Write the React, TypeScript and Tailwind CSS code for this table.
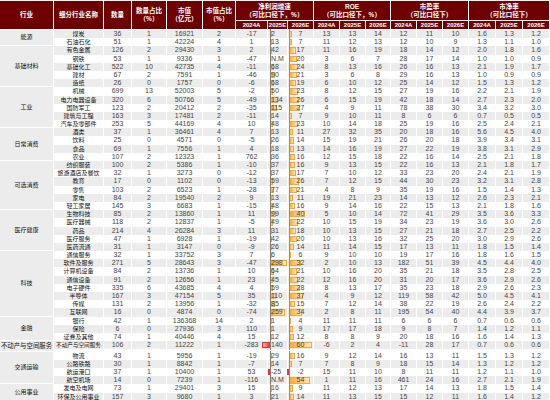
const groups: [string, string[]][] = [
  ["能源", [
    "煤炭 36 1 16921 2 -17 2 7 13 13 14 12 11 10 1.6 1.3 1.2",
    "石油石化 51 1 42224 4 1 13 7 11 12 13 12 10 9 1.3 1.1 1.0",
  ]],
  ["基础材料", [
    "有色金属 126 2 29430 3 2 42 17 11 16 19 18 14 12 2.0 1.8 1.6",
    "钢铁 53 1 9336 1 -47 N.M 20 3 6 7 28 17 14 1.0 1.0 0.9",
    "基础化工 522 10 42735 4 -11 68 24 8 13 16 26 16 13 2.1 1.9 1.7",
    "建材 67 2 7591 1 -46 90 21 3 6 8 29 16 13 1.0 0.9 0.9",
    "造纸 26 0 1757 0 -6 68 19 6 10 12 25 14 12 1.5 1.3 1.2",
  ]],
  ["工业", [
    "机械 699 13 52003 5 -2 50 23 8 12 15 27 19 16 2.2 2.1 1.9",
    "电力电器设备 320 6 50766 5 -49 134 26 6 15 19 42 18 14 2.7 2.3 2.0",
    "国防军工 123 2 20412 2 -35 115 27 4 9 11 78 38 30 3.4 3.2 3.0",
    "建筑与工程 163 3 17481 2 -11 14 7 9 10 11 8 6 6 0.7 0.5 0.5",
    "汽车及零部件 253 5 44169 4 10 48 23 10 14 18 25 19 16 2.5 2.4 2.1",
  ]],
  ["日常消费", [
    "酒类 37 1 36461 4 7 13 11 27 32 35 20 18 16 5.6 4.5 4.0",
    "饮料 25 0 4571 0 -5 26 14 15 19 21 26 20 18 3.9 3.4 3.1",
    "食品 69 1 7556 1 4 18 13 14 16 19 27 22 19 3.8 3.1 2.9",
    "农业 107 2 12323 1 762 36 16 12 15 18 22 16 14 2.5 2.1 1.8",
  ]],
  ["可选消费", [
    "纺织服装 100 2 5386 1 -10 37 16 9 13 15 22 16 13 2.1 1.8 1.7",
    "旅游酒店及餐饮 32 1 3273 0 -12 37 17 7 10 12 33 23 20 2.4 2.1 1.9",
    "教育 17 0 1102 0 -13 59 26 7 12 15 44 30 23 3.2 3.1 2.8",
    "零售 103 2 6523 1 -28 77 21 4 8 9 35 19 16 1.5 1.4 1.3",
    "家电 84 2 19540 2 9 13 11 19 21 23 14 13 12 2.6 2.3 2.1",
    "轻工家居 145 3 6683 1 -15 48 16 9 14 16 22 15 13 2.1 1.8 1.6",
  ]],
  ["医疗健康", [
    "生物科技 85 2 13860 1 11 99 40 5 10 14 72 41 29 3.5 3.6 3.3",
    "医疗器械 118 2 12837 1 -5 49 22 10 15 19 34 23 19 3.6 3.0 2.6",
    "药品 214 4 26284 3 11 31 18 10 13 15 27 21 18 2.7 2.5 2.2",
    "医疗服务 47 1 6928 1 -19 42 20 10 13 16 32 25 20 3.0 2.9 2.6",
    "医药流通 31 1 3147 0 -9 26 14 11 14 15 17 13 11 1.8 1.5 1.4",
  ]],
  ["科技", [
    "通信服务 32 1 33752 3 7 6 6 9 10 10 19 17 16 1.8 1.6 1.5",
    "软件及服务 271 5 28643 3 -47 298 32 2 10 13 182 51 39 4.5 4.4 4.0",
    "计算机设备 84 2 13736 1 10 64 21 10 16 20 35 21 18 3.5 2.8 2.5",
    "通信设备 91 2 12656 1 23 45 22 12 16 20 31 20 17 3.6 2.9 2.6",
    "电子硬件 335 6 43685 4 4 59 28 8 13 17 35 23 18 2.9 2.6 2.3",
    "半导体 167 3 47154 5 35 110 37 4 9 12 119 58 42 5.0 4.5 4.1",
    "传媒 131 2 13956 1 -32 85 15 7 12 14 38 22 19 2.6 2.4 2.2",
    "互联网 16 0 4874 0 -74 259 34 2 8 11 195 54 40 4.4 3.9 3.7",
  ]],
  ["金融", [
    "银行 42 1 136368 14 2 1 4 11 11 11 6 6 6 0.7 0.6 0.6",
    "保险 6 0 27936 3 110 1 9 17 17 18 9 8 7 1.4 1.2 1.1",
    "证券及其他 74 1 40446 4 15 12 12 8 8 9 20 18 16 1.6 1.4 1.3",
  ]],
  ["不动产与空间服务", [
    // ~ marks a value drawn with a negative bar
    "不动产与空间服务 106 2 11222 1 -283 ~140 60 -6 2 4 -11 28 17 0.7 0.6 0.6",
  ]],
  ["交通运输", [
    "物流 43 1 5956 1 -19 29 16 9 12 14 16 13 11 1.5 1.3 1.2",
    "公路铁路 30 1 8842 1 -7 14 7 7 8 9 18 15 14 1.3 1.2 1.2",
    "航运港口 37 1 10400 1 53 -25 -2 15 11 10 8 11 11 1.2 1.1 1.0",
    "航空机场 14 0 7239 1 -116 N.M 54 1 11 16 461 24 16 2.7 2.1 1.9",
  ]],
  ["公用事业", [
    "发电及电网 73 1 29401 3 15 16 9 11 12 13 17 14 13 1.8 1.5 1.4",
    "环保及公用事业 157 3 9680 1 3 21 14 11 13 15 15 12 11 1.6 1.4 1.2",
  ]],
];

const ROW_COLS =
  "grid-cols-[50px_28px_35px_36px_33px_32px_20px_26px_26px_26px_25px_26px_26px_26px_27px_27px_27px]";

const parseBar = (v: string) => {
  if (v.startsWith("~")) return -Number(v.slice(1));
  const n = Number(v);
  return isNaN(n) ? 0 : n;
};

const Bar = ({ value, scale }: { value: number; scale: number }) => {
  if (value === 0) return null;
  const w = Math.max(Math.abs(value) * scale, 1);
  if (value > 0)
    return (
      <span
        className="absolute top-[1px] bottom-[1px] left-0 border border-[#f3a838] bg-linear-to-r from-[#f5a936] to-[#fde6bf]"
        style={{ width: w }}
      />
    );
  return (
    <span
      className="absolute top-[1px] bottom-[1px] right-full border border-[#e8323a] bg-linear-to-l from-[#e8323a] to-[#f8b4b6]"
      style={{ width: w }}
    />
  );
};

const DataRow = ({ line, idx }: { line: string; idx: number }) => {
  const v = line.split(" ");
  const name = v[0];
  const bg = idx % 2 === 0 ? "bg-[#ececec]" : "bg-white";
  const cell = "border-r border-white text-center";
  return (
    <div className={`grid ${ROW_COLS} h-[8.2px] leading-[8.2px] ${bg} text-[#454545]`}>
      <div className={`${cell} text-[#111] whitespace-nowrap ${name.length > 7 ? "text-[5.6px]" : "text-[6px]"}`}>
        {name}
      </div>
      {v.slice(1, 6).map((x, i) => (
        <div key={i} className={cell}>{x}</div>
      ))}
      <div className="relative border-r border-white">
        <span className="absolute left-[2px] top-0 bottom-0">
          <Bar value={parseBar(v[6])} scale={0.057} />
        </span>
        <span className="absolute left-[2px] -top-px -bottom-px w-px bg-[#8a7d6c]" />
        <span className="relative pl-[3px]">{v[6].replace("~", "")}</span>
      </div>
      <div className="relative border-r border-white text-center">
        <span className="absolute left-px top-0 bottom-0">
          <Bar value={parseBar(v[7])} scale={0.39} />
        </span>
        <span className="absolute left-px -top-px -bottom-px w-px bg-[#b58b3e]" />
        <span className="relative">{v[7]}</span>
      </div>
      {v.slice(8).map((x, i) => (
        <div key={i} className={cell}>{x}</div>
      ))}
    </div>
  );
};

const H = "bg-[#6e0000] text-white font-bold border-r border-b border-white flex flex-col items-center justify-center leading-[8px]";

const Header = () => (
  <div className="grid grid-cols-[54px_50px_28px_35px_36px_33px_32px_20px_26px_26px_26px_25px_26px_26px_26px_27px_27px_27px] grid-rows-[20px_9px] text-[6.5px]">
    <div className={`${H} row-span-2`}>行业</div>
    <div className={`${H} row-span-2`}>细分行业名称</div>
    <div className={`${H} row-span-2`}>数量</div>
    <div className={`${H} row-span-2`}><span>数量占比</span><span>（%）</span></div>
    <div className={`${H} row-span-2`}><span>市值</span><span>（亿元）</span></div>
    <div className={`${H} row-span-2`}><span>市值占比</span><span>（%）</span></div>
    <div className={`${H} col-span-3`}><span>净利润增速</span><span>（可比口径下，%）</span></div>
    <div className={`${H} col-span-3`}><span>ROE</span><span>（可比口径下，%）</span></div>
    <div className={`${H} col-span-3`}><span>市盈率</span><span>（可比口径下）</span></div>
    <div className={`${H} col-span-3`}><span>市净率</span><span>（可比口径下）</span></div>
    {Array.from({ length: 12 }).map((_, i) => (
      <div key={i} className={`${H} text-[6px] whitespace-nowrap`}>
        {["2024A", "2025E", "2026E"][i % 3]}
      </div>
    ))}
  </div>
);

export default function App() {
  let idx = 0;
  return (
    <div className="w-[550px] h-[400px] bg-white pt-px overflow-hidden font-['Liberation_Sans','Noto_Sans_CJK_SC',sans-serif] text-[7px]">
      <Header />
      {groups.map(([g, rows]) => (
        <div key={g} className="flex">
          <div
            className={`w-[54px] shrink-0 flex items-center justify-center bg-[#ececec] border-r border-b border-white text-[#111] whitespace-nowrap ${g.length > 4 ? "text-[6.4px]" : "text-[6px]"}`}
          >
            {g}
          </div>
          <div className="flex flex-col">
            {rows.map((r) => (
              <DataRow key={r} line={r} idx={idx++} />
            ))}
          </div>
        </div>
      ))}
    </div>
  );
}
